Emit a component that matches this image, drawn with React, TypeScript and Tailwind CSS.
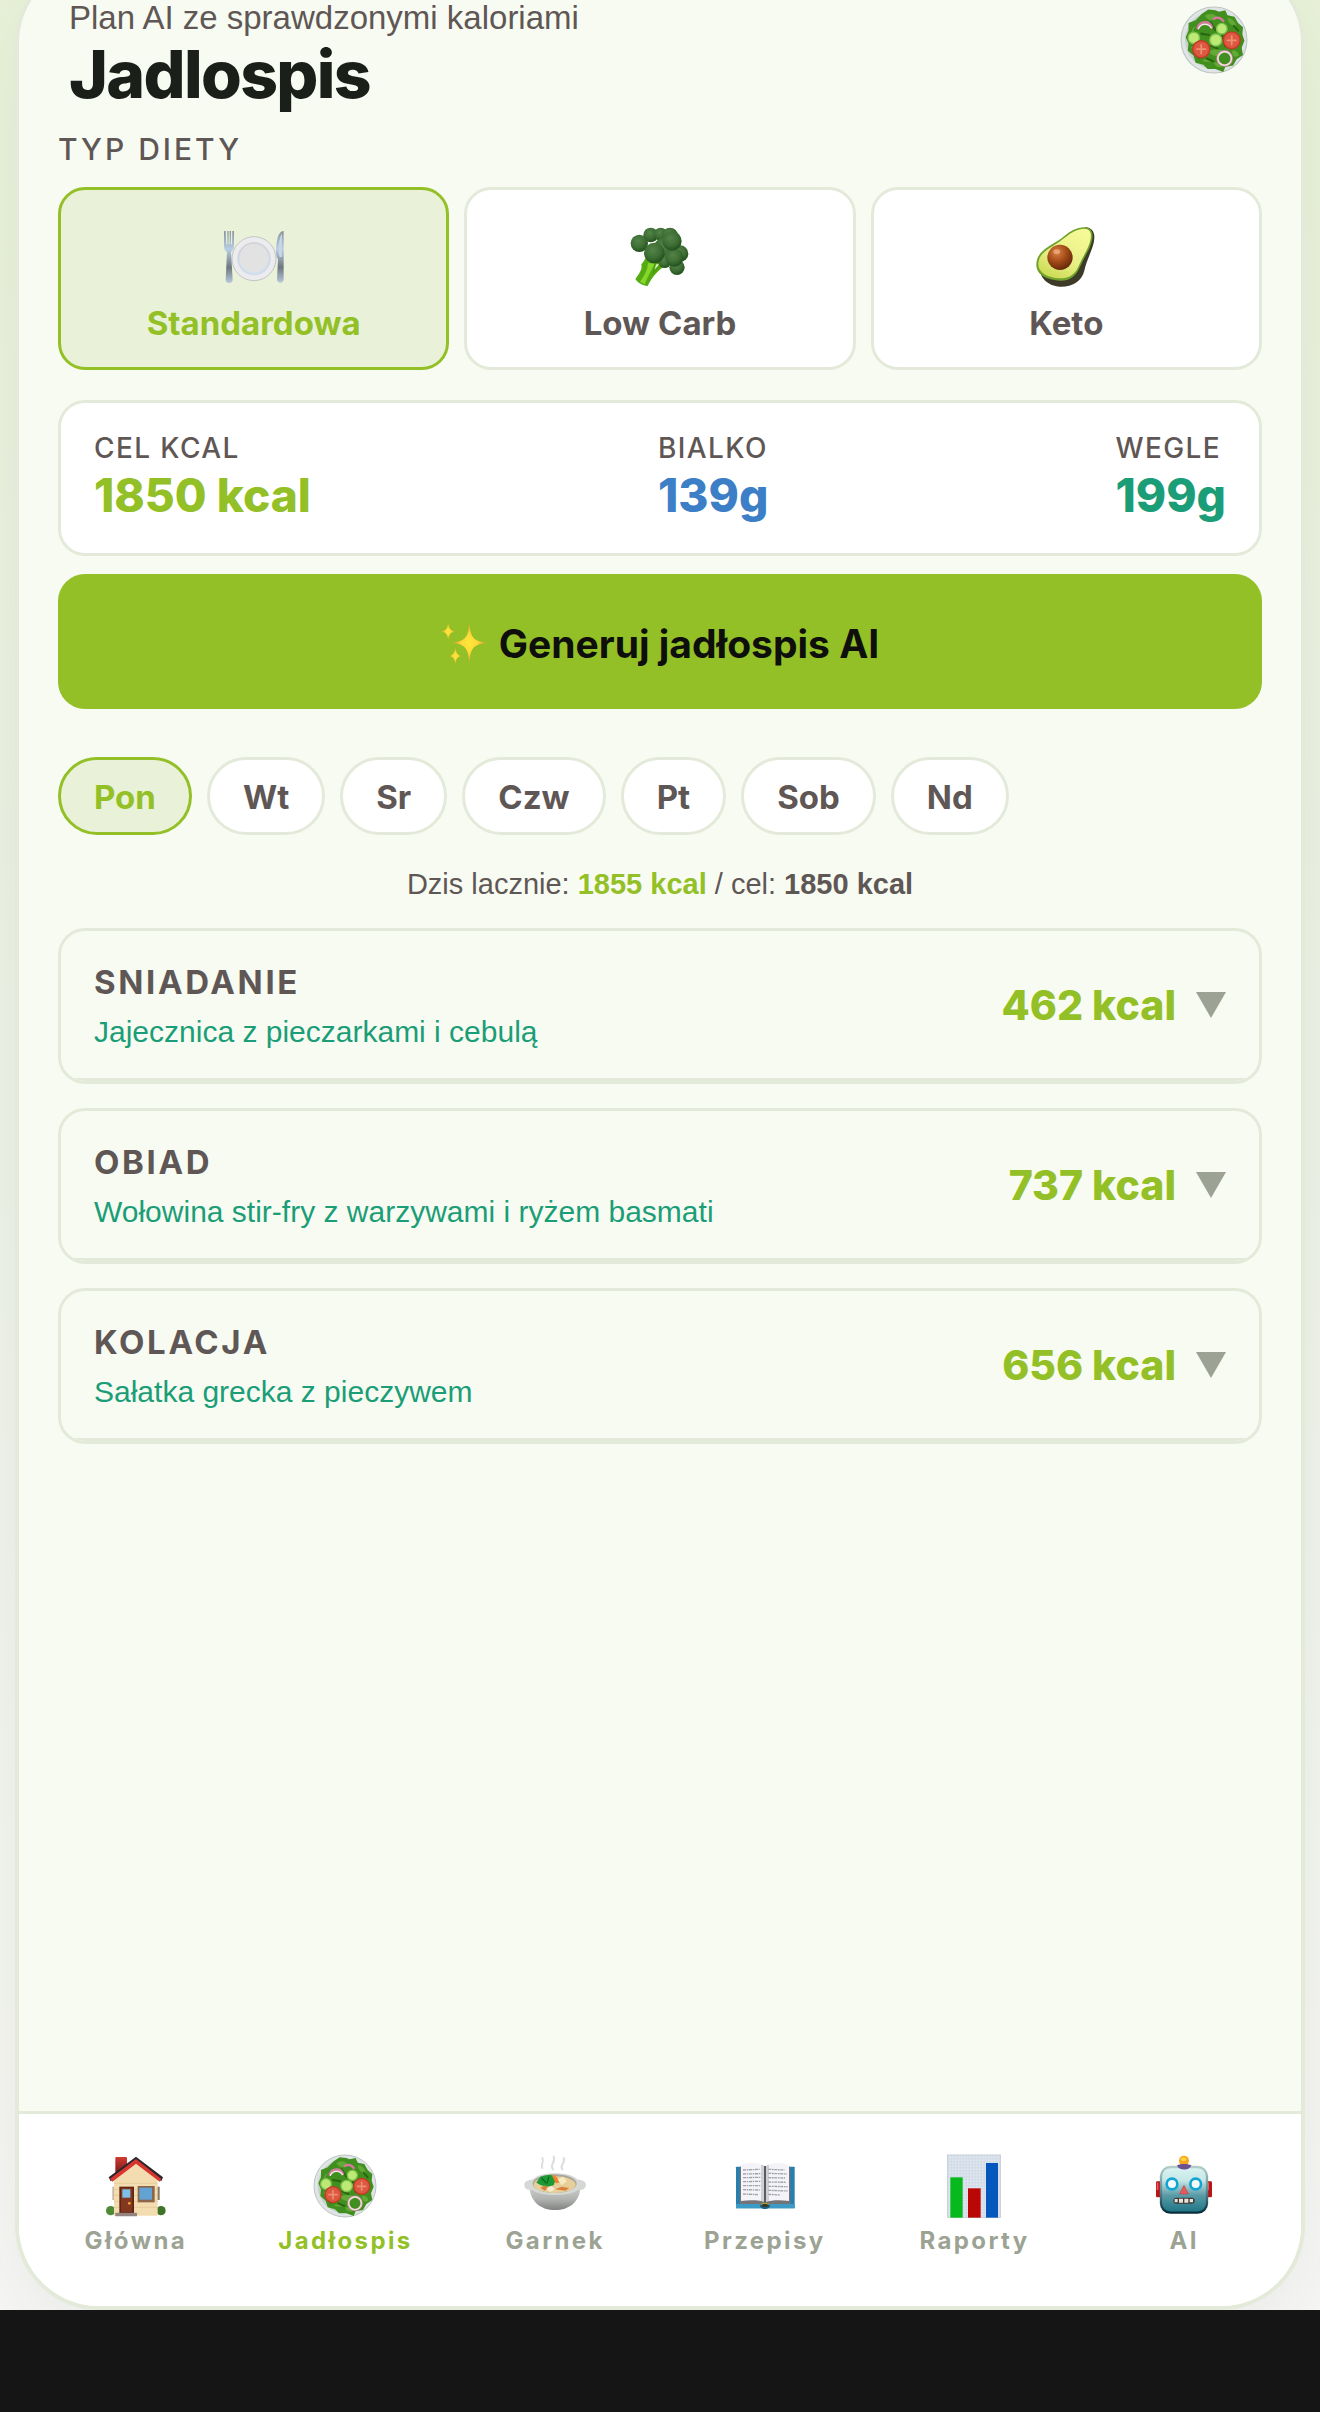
import { useState } from 'react';

const diets = [
  { id: 'standard', label: 'Standardowa', Icon: PlateIcon },
  { id: 'lowcarb', label: 'Low Carb', Icon: BroccoliIcon },
  { id: 'keto', label: 'Keto', Icon: AvocadoIcon },
];

const macros = [
  { label: 'Cel kcal', value: '1850 kcal', color: 'text-[#93c026]' },
  { label: 'Bialko', value: '139g', color: 'text-[#3d7fc6]' },
  { label: 'Wegle', value: '199g', color: 'text-[#1b9e77]' },
];

const days = ['Pon', 'Wt', 'Sr', 'Czw', 'Pt', 'Sob', 'Nd'];

const meals = [
  { name: 'Sniadanie', dish: 'Jajecznica z pieczarkami i cebulą', kcal: 462 },
  { name: 'Obiad', dish: 'Wołowina stir-fry z warzywami i ryżem basmati', kcal: 737 },
  { name: 'Kolacja', dish: 'Sałatka grecka z pieczywem', kcal: 656 },
];

const navItems = [
  { label: 'Główna', Icon: HouseIcon },
  { label: 'Jadłospis', Icon: SaladIcon, active: true },
  { label: 'Garnek', Icon: PotIcon },
  { label: 'Przepisy', Icon: BookIcon },
  { label: 'Raporty', Icon: ChartIcon },
  { label: 'AI', Icon: RobotIcon },
];

interface IconProps {
  className?: string;
}

function PlateIcon({ className }: IconProps) {
  return (
    <svg className={className} viewBox="0 0 180 180" aria-hidden="true">
      <defs>
        <linearGradient id="steel" x1="0" y1="0" x2="0" y2="1">
          <stop offset="0" stopColor="#8a939b" />
          <stop offset="0.35" stopColor="#b9cfe4" />
          <stop offset="0.7" stopColor="#6f777e" />
          <stop offset="1" stopColor="#b7c9db" />
        </linearGradient>
      </defs>
      <circle cx="90" cy="95" r="66" fill="#ececef" stroke="#c3c4c8" strokeWidth="3" />
      <circle cx="90" cy="95" r="50" fill="#d3d5da" />
      <circle cx="90" cy="98" r="46" fill="#cfdff0" />
      <circle cx="90" cy="94" r="43" fill="#e2e2e3" />
      {/* Fork */}
      <path d="M0 12h5l2 40h3V12h4v40h3V12h4v40h3l1-40h5v46c0 10-5 14-9 17l5 83c0 13-21 13-21 0l4-83c-5-3-9-7-9-17z" fill="url(#steel)" />
      {/* Knife */}
      <path d="M179 12v144c0 15-20 15-20 0l3-60c-8-8-7-30-4-48 3-20 8-35 21-36z" fill="url(#steel)" />
      <path d="M174 20v70h-7c-7-14-4-56 7-70z" fill="#c6d5e8" />
    </svg>
  );
}

function BroccoliIcon({ className }: IconProps) {
  return (
    <svg className={className} viewBox="0 0 180 180" aria-hidden="true">
      <defs>
        <radialGradient id="floret" cx="0.42" cy="0.35" r="0.65">
          <stop offset="0" stopColor="#55834a" />
          <stop offset="0.6" stopColor="#3d6e34" />
          <stop offset="1" stopColor="#23501d" />
        </radialGradient>
      </defs>
      <path d="M46 86c2 10-6 18-12 26 4 16-8 30-18 44 8 12 22 20 37 21 10-20 24-40 46-56l-4-24z" fill="#55ac12" />
      <path d="M54 108c-2 22-10 38-24 56l14 8c8-22 20-42 30-62z" fill="#86d62c" />
      <path d="M74 108l-6 36c8-12 20-22 28-30z" fill="#4b9c10" />
      <path d="M78 112l-4 16 14-16z" fill="#d9f5b4" />
      <g fill="url(#floret)">
        <circle cx="62" cy="24" r="22" />
        <circle cx="92" cy="22" r="20" />
        <circle cx="120" cy="26" r="24" />
        <circle cx="104" cy="66" r="34" />
        <circle cx="104" cy="104" r="19" />
        <circle cx="150" cy="80" r="25" />
        <circle cx="141" cy="121" r="23" />
        <circle cx="133" cy="92" r="27" />
        <circle cx="126" cy="42" r="29" />
        <circle cx="28" cy="49" r="26" />
        <circle cx="73" cy="78" r="31" />
      </g>
    </svg>
  );
}

function AvocadoIcon({ className }: IconProps) {
  return (
    <svg className={className} viewBox="0 0 180 180" aria-hidden="true">
      <defs>
        <linearGradient id="flesh" x1="0.8" y1="0" x2="0.3" y2="1">
          <stop offset="0" stopColor="#f6fa98" />
          <stop offset="0.6" stopColor="#e9ef86" />
          <stop offset="1" stopColor="#cddb56" />
        </linearGradient>
        <radialGradient id="pit" cx="0.38" cy="0.3" r="0.75">
          <stop offset="0" stopColor="#dd8145" />
          <stop offset="0.5" stopColor="#a34b17" />
          <stop offset="1" stopColor="#5e250a" />
        </radialGradient>
      </defs>
      <path d="M148 1c19 0 28 14 27 32-1 30-22 60-30 98-8 33-40 50-74 48-26-2-60-18-60-60z" fill="#3d3a2a" />
      <path d="M145 1c20 0 27 14 24 34-5 30-24 54-37 84-12 29-32 43-59 42C36 159 0 146 1 112 3 66 48 58 86 26 104 12 122 1 145 1z" fill="#6fa22b" />
      <path d="M145 5c17 0 22 13 19 30-5 28-23 52-36 82-11 26-30 38-56 37C40 153 6 140 7 110 9 71 51 62 89 30 106 16 124 5 145 5z" fill="url(#flesh)" />
      <ellipse cx="72" cy="91" rx="38" ry="38" fill="url(#pit)" />
      <ellipse cx="62" cy="74" rx="10" ry="7" fill="#f0b58a" opacity="0.7" />
    </svg>
  );
}

function SparklesIcon({ className }: IconProps) {
  return (
    <svg className={className} viewBox="0 0 139 132" aria-hidden="true">
      <defs>
        <radialGradient id="spark">
          <stop offset="0" stopColor="#ffe838" />
          <stop offset="0.45" stopColor="#ffd83a" />
          <stop offset="1" stopColor="#e39a2c" />
        </radialGradient>
      </defs>
      <path d="M86 0c3 46 10 58 53 64-43 6-50 18-53 66-3-48-10-60-53-66 43-6 50-18 53-64z" fill="url(#spark)" />
      <path d="M21 1c2 20 6 25 21 28-15 3-19 8-21 28C19 37 15 32 0 29 15 26 19 21 21 1z" fill="url(#spark)" />
      <path d="M43 77c2 19 5 24 19 27-14 3-17 8-19 27-2-19-5-24-19-27 14-3 17-8 19-27z" fill="url(#spark)" />
    </svg>
  );
}

function HouseIcon({ className }: IconProps) {
  return (
    <svg className={className} viewBox="0 0 192 192" aria-hidden="true">
      <defs>
        <linearGradient id="chimney" x1="0" y1="0" x2="0" y2="1">
          <stop offset="0" stopColor="#d23a33" />
          <stop offset="1" stopColor="#6d1815" />
        </linearGradient>
      </defs>
      <rect x="34" y="9" width="35" height="54" rx="3" fill="url(#chimney)" />
      <circle cx="20" cy="170" r="14" fill="#4f8a34" />
      <circle cx="171" cy="170" r="14" fill="#3f7428" />
      <rect x="25" y="98" width="8" height="40" fill="#c9b7a1" />
      <rect x="158" y="98" width="9" height="40" fill="#857764" />
      <path d="M96 20l65 52v113H30V72z" fill="#f3dcb0" />
      <path d="M30 88h131M30 106h131M30 124h131M30 142h131M30 160h131" stroke="#e3c793" strokeWidth="2" />
      {/* Roof */}
      <path d="M96 8l81 62-5 12-76-56-76 56-6-12z" fill="#27272b" />
      <path d="M96 15l76 60-5 8-71-54-71 54-7-9z" fill="#d8352f" />
      <rect x="46" y="98" width="44" height="79" fill="#5e2413" />
      <rect x="51" y="102" width="34" height="72" fill="#84371f" />
      <rect x="55" y="106" width="24" height="25" fill="#7dbfe8" />
      <circle cx="76" cy="148" r="4" fill="#f0ae2e" />
      <rect x="101" y="96" width="51" height="49" fill="#8b664b" />
      <rect x="106" y="101" width="38" height="36" fill="#62a3d4" />
      <rect x="34" y="176" width="65" height="11" rx="2" fill="#94857f" />
    </svg>
  );
}

function SaladIcon({ className }: IconProps) {
  return (
    <svg className={className} viewBox="0 0 192 192" aria-hidden="true">
      <circle cx="96" cy="96" r="93" fill="#dfe5e4" stroke="#bcc5c3" strokeWidth="3" />
      <circle cx="96" cy="96" r="82" fill="#c6d2c9" />
      {/* Lettuce */}
      <path d="M62 22l18-12 20 2 10 4 18-4 6 14 20 4 10 18 14 12-2 20 6 18-8 20 4 20-18 12-10 18-22 4-6 14-22-8-22 0-12-12-22-6-6-20-16-14 2-20-8-18 8-18 0-22 20-8z" fill="#418f1f" />
      <path d="M70 28c12-10 28-8 36 6-12 8-24 10-36-6zM134 34c12 0 24 10 24 24-12 0-22-10-24-24zM30 118c10-8 20-4 24 10M82 130c12-12 34-8 42 0-10 14-30 16-42 0zM146 126c10-2 20 4 20 14-8 6-18 4-20-14zM44 56c-8 6-14 14-10 22M96 160c10-2 20 2 24 10-10 6-20 2-24-10zM62 156c8-8 18-6 24 2" fill="#62a936" />
      <path d="M86 46l14 22M60 78l22 4M120 84l8 30M76 148l18 8M152 56l12 14M88 112l18 8M40 130l14 16" stroke="#2a6612" strokeWidth="6" strokeLinecap="round" />
      <g fill="#bdea77" stroke="#7fc24a" strokeWidth="4">
        <circle cx="39" cy="90" r="16" />
        <circle cx="118" cy="64" r="15" />
        <circle cx="101" cy="96" r="17" />
      </g>
      <g fill="#dc5840" stroke="#c23a26" strokeWidth="4">
        <circle cx="60" cy="122" r="24" />
        <circle cx="146" cy="97" r="24" />
      </g>
      <path d="M60 110v24M48 122h24M146 85v24M134 97h24" stroke="#ee8f73" strokeWidth="5" strokeLinecap="round" />
      <g fill="none" strokeLinecap="round">
        <path d="M50 62c6-22 34-20 40-2M96 36c10-6 20-2 26 6" stroke="#d8789c" strokeWidth="7" />
        <path d="M52 64c8-16 28-16 36-2" stroke="#f6e6ec" strokeWidth="4" />
        <circle cx="126" cy="148" r="20" stroke="#cf8fa5" strokeWidth="7" />
        <circle cx="126" cy="148" r="19" stroke="#efe3e0" strokeWidth="4" />
      </g>
    </svg>
  );
}

function PotIcon({ className }: IconProps) {
  return (
    <svg className={className} viewBox="0 0 192 192" aria-hidden="true">
      <defs>
        <linearGradient id="bowl" x1="0" y1="0" x2="0" y2="1">
          <stop offset="0" stopColor="#c9cbc8" />
          <stop offset="0.5" stopColor="#b0b2b0" />
          <stop offset="1" stopColor="#80827f" />
        </linearGradient>
      </defs>
      <path d="M58 42c-8-12 8-16 0-30M90 46c-12-16 10-22 2-38M118 46c-10-14 12-20 4-34" fill="none" stroke="#dcdcdc" strokeWidth="6" strokeLinecap="round" />
      <path d="M20 104c4 40 34 64 76 64s72-24 76-64z" fill="url(#bowl)" />
      <path d="M4 92c0-10 14-14 26-16 20-24 112-24 132 0 14 2 27 6 27 16 0 12-12 18-26 16-20 20-112 20-134 0C14 110 4 104 4 92z" fill="#d6d8d5" />
      <ellipse cx="95" cy="89" rx="66" ry="28" fill="#a8a49a" />
      <ellipse cx="95" cy="92" rx="63" ry="25" fill="#e6cf98" />
      <path d="M40 86l12-18 18-4 14-2 14 14-6 18-20 4-18-4z" fill="#1d9a35" />
      <path d="M56 72l14 16M78 68l-6 20" stroke="#0d6b20" strokeWidth="4" />
      <path d="M86 62c10 0 22 12 22 24l-10 2z" fill="#f0822e" />
      <path d="M104 76l16-8 12 14-16 12z" fill="#f8e9c0" />
      <path d="M52 102l14-8 8 8-8 8zM96 106l20-8 22 4-10 8z" fill="#d9813c" />
      <path d="M70 104l16-8 10 10-14 8z" fill="#f6ecd4" />
    </svg>
  );
}

function BookIcon({ className }: IconProps) {
  return (
    <svg className={className} viewBox="0 0 192 192" aria-hidden="true">
      <rect x="9" y="38" width="176" height="125" rx="2" fill="#2580b0" />
      <path d="M9 150h176v13H9z" fill="#3b9ac6" />
      <path d="M20 38l76 4 76-4v112H20z" fill="#747478" />
      <path d="M24 32c24-6 56-8 72 4v108c-20-6-48-6-72-3z" fill="#f3f3f8" />
      <path d="M168 32c-24-6-56-8-72 4v108c20-6 48-6 72-3z" fill="#f3f3f8" />
      <path d="M96 36v110" stroke="#5c5c60" strokeWidth="6" />
      <path d="M84 32c6 0 9 2 9 6v104l-9-2zM108 32c-6 0-9 2-9 6v104l9-2z" fill="#cfcfd6" />
      <path d="M30 48l50-2M30 60l52-1M30 71l52-1M30 83l52-1M30 95l52 0M30 107l50 1M30 120l46 2M106 46l48 2M106 58l56 2M106 71l50 1M106 84l54 1M106 97l58 1M106 109l58 2M106 121l36 2" stroke="#9fa0aa" strokeWidth="4" strokeDasharray="9 2 5 2" />
      <ellipse cx="96" cy="156" rx="15" ry="9" fill="#1c5f86" />
      <ellipse cx="96" cy="154" rx="11" ry="5" fill="#3a3a20" />
      <path d="M84 151q12-7 24 0" fill="none" stroke="#c8a92e" strokeWidth="3" />
    </svg>
  );
}

function ChartIcon({ className }: IconProps) {
  return (
    <svg className={className} viewBox="0 0 192 192" aria-hidden="true">
      <defs>
        <pattern id="grid" x="17" y="4" width="9" height="9" patternUnits="userSpaceOnUse">
          <path d="M9 0H0v9" fill="none" stroke="#b9cbdc" strokeWidth="2" />
        </pattern>
      </defs>
      <rect x="15" y="2" width="162" height="189" fill="#dfe6ee" />
      <rect x="15" y="2" width="162" height="189" fill="url(#grid)" />
      <rect x="16" y="3" width="160" height="187" fill="none" stroke="#c3c9ce" strokeWidth="2" />
      <rect x="25" y="70" width="37" height="121" fill="#08b91d" />
      <rect x="78" y="103" width="38" height="88" fill="#bb0606" />
      <rect x="132" y="27" width="36" height="164" fill="#0457bd" />
    </svg>
  );
}

function RobotIcon({ className }: IconProps) {
  return (
    <svg className={className} viewBox="0 0 192 192" aria-hidden="true">
      <defs>
        <linearGradient id="head" x1="0" y1="0" x2="0" y2="1">
          <stop offset="0" stopColor="#d9f4f3" />
          <stop offset="0.3" stopColor="#c6e6e6" />
          <stop offset="0.62" stopColor="#5a9ba6" />
          <stop offset="1" stopColor="#1c7385" />
        </linearGradient>
        <linearGradient id="rim" x1="0" y1="0" x2="0" y2="1">
          <stop offset="0" stopColor="#b2cdc9" />
          <stop offset="0.5" stopColor="#5d8d94" />
          <stop offset="1" stopColor="#062f3b" />
        </linearGradient>
      </defs>
      <rect x="12" y="82" width="16" height="48" rx="4" fill="#b81519" />
      <rect x="164" y="82" width="16" height="48" rx="4" fill="#b81519" />
      <rect x="14" y="86" width="5" height="22" fill="#f0575a" />
      <rect x="166" y="86" width="5" height="22" fill="#f0575a" />
      <rect x="27" y="39" width="138" height="137" rx="28" fill="url(#head)" stroke="url(#rim)" strokeWidth="7" />
      <circle cx="96" cy="20" r="15" fill="#fba51a" />
      <ellipse cx="95" cy="16" rx="8" ry="6" fill="#ffd84a" />
      <path d="M75 34c12-5 30-5 43 0-4 16-38 18-43 0z" fill="#6b5191" />
      <g fill="#f4fbff" stroke="#12a5cf" strokeWidth="8">
        <circle cx="60" cy="90" r="16" />
        <circle cx="131" cy="90" r="16" />
      </g>
      <path d="M96 94l13 26H83z" fill="#e8595c" stroke="#b5474f" strokeWidth="2" />
      <rect x="64" y="131" width="64" height="18" rx="9" fill="#3c3a38" />
      <path d="M68 135h9v10h-9zM81 134h12v12H81zM97 134h12v12H97zM113 135h10v10h-10z" fill="#e9e4da" />
    </svg>
  );
}

export default function App() {
  const [diet, setDiet] = useState('standard');
  const [day, setDay] = useState('Pon');
  const [openMeal, setOpenMeal] = useState<string | null>(null);

  return (
    <div className="flex min-h-screen flex-col bg-[#151515] font-['Inter',sans-serif] text-[#5f5755]">
      <div className="flex flex-1 flex-col overflow-hidden bg-linear-to-b from-[#eaf3da] via-[#eff4ea] to-[#f8f8f7] px-[15px]">
        <div className="-mt-[41px] flex flex-1 flex-col overflow-hidden rounded-[84px] border-4 border-[#e4ead9] bg-[#f8fbf2] shadow-[0_24px_90px_rgba(40,50,30,0.08)]">
          <main className="flex flex-1 flex-col px-[39px] pt-[37px]">
            <header className="flex items-start justify-between pr-3.5 pl-[11px]">
              <div>
                <p className="font-['Liberation_Sans',sans-serif] text-[33px] leading-[36px]">Plan AI ze sprawdzonymi kaloriami</p>
                <h1 className="text-[66px] leading-[76px] font-extrabold tracking-tight text-[#1a1f1a]">Jadlospis</h1>
              </div>
              <SaladIcon className="mt-1.5 size-[68px]" />
            </header>

            <h2 className="mt-[17px] text-[30px] leading-[40px] font-medium tracking-widest uppercase">Typ diety</h2>
            <div className="mt-[18px] grid grid-cols-3 gap-[15px]">
              {diets.map(({ id, label, Icon }) => (
                <button
                  key={id}
                  type="button"
                  aria-pressed={diet === id}
                  onClick={() => setDiet(id)}
                  className={`flex flex-col items-center gap-4 rounded-[27px] border-3 pt-[37px] pb-6 text-[33px] leading-[40px] font-bold ${
                    diet === id ? 'border-[#93c026] bg-[#e9f2d8] text-[#93c026]' : 'border-[#e4ead9] bg-white'
                  }`}
                >
                  <Icon className="size-[60px]" />
                  {label}
                </button>
              ))}
            </div>

            <dl className="mt-[30px] flex justify-between rounded-[27px] border-3 border-[#e4ead9] bg-white px-[33px] pt-[29px] pb-[27px]">
              {macros.map((macro) => (
                <div key={macro.label}>
                  <dt className="text-[28px] leading-8 font-medium tracking-wider uppercase">{macro.label}</dt>
                  <dd className={`text-[46px] leading-[62px] font-extrabold ${macro.color}`}>{macro.value}</dd>
                </div>
              ))}
            </dl>

            <button
              type="button"
              className="mt-[18px] flex items-center justify-center gap-3 rounded-[27px] bg-[#93c026] pt-[46px] pb-[42px] text-[39px] leading-[47px] font-bold text-[#0e0f0c]"
            >
              <SparklesIcon className="h-[43px] w-[46px]" />
              Generuj jadłospis AI
            </button>

            <div className="mt-12 flex flex-wrap gap-[15px]">
              {days.map((name) => (
                <button
                  key={name}
                  type="button"
                  aria-pressed={day === name}
                  onClick={() => setDay(name)}
                  className={`rounded-full border-3 px-[33px] pt-[17px] pb-[15px] text-[33px] leading-[40px] font-bold ${
                    day === name ? 'border-[#93c026] bg-[#e9f2d8] text-[#93c026]' : 'border-[#e4ead9] bg-white'
                  }`}
                >
                  {name}
                </button>
              ))}
            </div>

            <p className="mt-[25px] text-center font-['Liberation_Sans',sans-serif] text-[29px] leading-[48px]">
              Dzis lacznie: <strong className="font-bold text-[#93c026]">1855 kcal</strong> / cel:{' '}
              <strong className="font-bold">1850 kcal</strong>
            </p>

            <div className="mt-5 flex flex-col gap-6">
              {meals.map((meal) => (
                <section key={meal.name} className="overflow-hidden rounded-[27px] border-3 border-[#e4ead9]">
                  <button
                    type="button"
                    aria-expanded={openMeal === meal.name}
                    onClick={() => setOpenMeal(openMeal === meal.name ? null : meal.name)}
                    className="flex w-full items-center justify-between border-b-3 border-[#e4ead9] px-[33px] pt-6 pb-[23px] text-left"
                  >
                    <span className="flex flex-col">
                      <span className="text-[33px] leading-[54px] font-bold tracking-[0.08em] uppercase">{meal.name}</span>
                      <span className="font-['Liberation_Sans',sans-serif] text-[30px] leading-[46px] text-[#1b9e77]">{meal.dish}</span>
                    </span>
                    <span className="flex items-center gap-5">
                      <span className="text-[41px] leading-[46px] font-extrabold text-[#93c026]">{meal.kcal} kcal</span>
                      <svg className="h-[26px] w-[30px] text-[#9ca394]" viewBox="0 0 30 26" fill="currentColor" aria-hidden="true">
                        <path d="M0 0h30L15 26z" />
                      </svg>
                    </span>
                  </button>
                </section>
              ))}
            </div>
          </main>

          {/* Bottom navigation */}
          <nav className="grid grid-cols-6 border-t-3 border-[#e4ead9] bg-white px-3 pt-10 pb-[49px]">
            {navItems.map(({ label, Icon, active }) => (
              <a
                key={label}
                href="#"
                aria-current={active ? 'page' : undefined}
                className={`flex flex-col items-center gap-[7px] text-[24px] leading-8 font-bold tracking-widest ${
                  active ? 'text-[#93c026]' : 'text-[#9ca394]'
                }`}
              >
                <Icon className="size-16" />
                {label}
              </a>
            ))}
          </nav>
        </div>
      </div>
      <div className="h-[102px]" />
    </div>
  );
}
